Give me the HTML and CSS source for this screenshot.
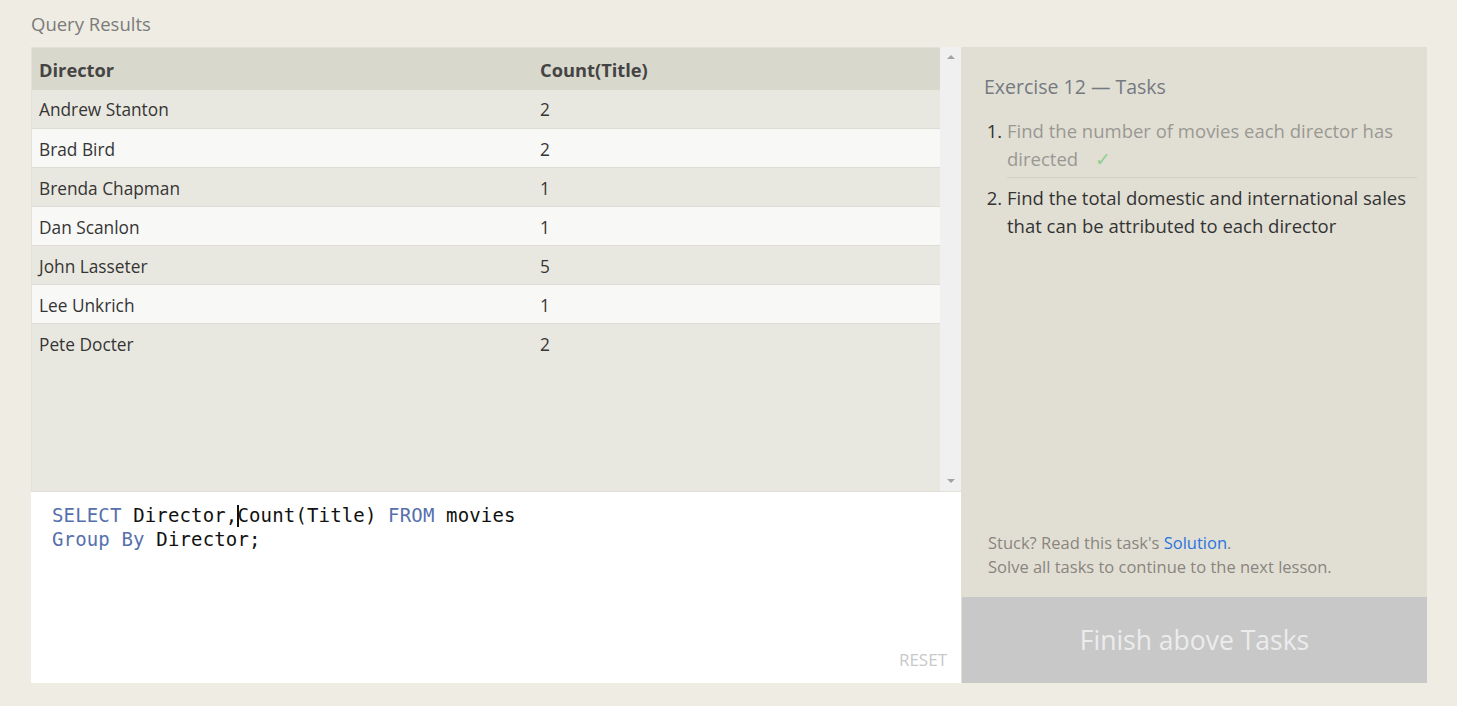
FILE: index.html
```html
<!DOCTYPE html>
<html>
<head>
<meta charset="utf-8">
<link rel="stylesheet" href="styles.css">
</head>
<body>
<header class="page-title">Query Results</header>
<main class="workspace">
  <section class="left">
    <div class="results">
      <div class="table-area">
        <table class="grid">
          <thead>
            <tr><th class="col-a">Director</th><th>Count(Title)</th></tr>
          </thead>
          <tbody>
            <tr><td>Andrew Stanton</td><td>2</td></tr>
            <tr><td>Brad Bird</td><td>2</td></tr>
            <tr><td>Brenda Chapman</td><td>1</td></tr>
            <tr><td>Dan Scanlon</td><td>1</td></tr>
            <tr><td>John Lasseter</td><td>5</td></tr>
            <tr><td>Lee Unkrich</td><td>1</td></tr>
            <tr><td>Pete Docter</td><td>2</td></tr>
          </tbody>
        </table>
      </div>
      <div class="scrollbar">
        <span class="arrow up"></span>
        <span class="arrow down"></span>
      </div>
    </div>
    <div class="editor">
      <pre class="code"><span class="kw">SELECT</span> Director,<span class="caret"></span>Count(Title) <span class="kw">FROM</span> movies
<span class="kw">Group By</span> Director;</pre>
      <div class="reset">RESET</div>
    </div>
  </section>
  <aside class="right">
    <div class="tasks">
      <h2 class="tasks-title">Exercise 12 — Tasks</h2>
      <ol class="task-list">
        <li class="task done">Find the number of movies each director has directed <span class="check">✓</span></li>
        <li class="task">Find the total domestic and international sales that can be attributed to each director</li>
      </ol>
    </div>
    <div class="help">
      <div>Stuck? Read this task's <a class="link">Solution</a>.</div>
      <div>Solve all tasks to continue to the next lesson.</div>
    </div>
    <div class="finish">Finish above Tasks</div>
  </aside>
</main>
</body>
</html>
```
FILE: styles.css
```css
html, body {
  margin: 0;
  padding: 0;
}
body {
  background: #efece4;
  font-family: "Open Sans", "Noto Sans", sans-serif;
  padding: 0 30px 0 31px;
  height: 706px;
  box-sizing: border-box;
  overflow: hidden;
}
.page-title {
  height: 47px;
  display: flex;
  align-items: center;
  font-size: 18.5px;
  color: #7b7b7b;
}
.workspace {
  display: flex;
  height: 636px;
}
.left {
  width: 930px;
  display: flex;
  flex-direction: column;
}
.results {
  height: 444px;
  display: flex;
  background: #e9e8e0;
  border-left: 1px solid #e3e2da;
  box-sizing: border-box;
}
.table-area {
  flex: 1;
}
.grid {
  width: 100%;
  border-collapse: collapse;
  font-size: 17.3px;
  color: #353535;
}
.grid th {
  text-align: left;
  background: #d9d8cc;
  height: 42px;
  padding: 2px 7px 0;
  font-size: 18.3px;
  font-weight: 700;
  color: #444;
  border-top: 1px solid #e2e1d9;
  box-sizing: border-box;
}
.grid .col-a {
  width: 501px;
}
.grid td {
  height: 39px;
  padding: 2px 7px 0;
  border-bottom: 1px solid #dedcd4;
  box-sizing: border-box;
}
.grid tbody tr:nth-child(odd) td {
  background: #e9e8e0;
}
.grid tbody tr:nth-child(even) td {
  background: #f8f8f7;
}
.grid tbody tr:last-child td {
  border-bottom: none;
}
.scrollbar {
  width: 21px;
  background: #f0f0f0;
  display: flex;
  flex-direction: column;
  justify-content: space-between;
  align-items: center;
  padding: 8px 0 8px;
  box-sizing: border-box;
}
.arrow {
  width: 0;
  height: 0;
  border-left: 4px solid transparent;
  border-right: 4px solid transparent;
}
.arrow.up {
  border-bottom: 4px solid #a3a3a3;
}
.arrow.down {
  border-top: 4px solid #a3a3a3;
}
.editor {
  flex: 1;
  background: #fff;
  border-top: 1px solid #e2e0d8;
  display: flex;
  flex-direction: column;
  justify-content: space-between;
}
.code {
  margin: 0;
  padding: 11px 0 0 21px;
  font-family: "DejaVu Sans Mono", monospace;
  font-size: 19px;
  letter-spacing: 0.15px;
  line-height: 24px;
  color: #111;
}
.kw {
  color: #5670ad;
}
.caret {
  display: inline-block;
  width: 0;
  height: 22px;
  border-left: 2px solid #111;
  vertical-align: -5px;
  margin-right: -2px;
}
.reset {
  align-self: flex-end;
  font-size: 17px;
  color: #c9c9c9;
  padding: 0 14px 12px 0;
}
.right {
  width: 466px;
  background: #e1dfd4;
  display: flex;
  flex-direction: column;
}
.tasks {
  padding: 27px 10px 0 23px;
}
.tasks-title {
  margin: 0 0 17px;
  font-size: 19.5px;
  font-weight: 400;
  color: #757a80;
  line-height: 26px;
}
.task-list {
  margin: 0;
  padding: 0 0 0 23px;
  font-size: 18.5px;
  line-height: 28px;
  color: #333;
}
.task {
  padding-left: 0;
}
.task.done {
  color: #9a9893;
  padding-bottom: 4px;
  border-bottom: 1px solid #d2d0c5;
  margin-bottom: 6px;
}
.task::marker {
  color: #333;
}
.check {
  color: #8fcf8f;
  margin-left: 12px;
}
.help {
  margin-top: auto;
  padding: 0 10px 18px 27px;
  font-size: 16.5px;
  line-height: 24px;
  color: #8a857e;
}
.link {
  color: #2a74e0;
}
.finish {
  height: 86px;
  background: #c8c8c8;
  display: flex;
  align-items: center;
  justify-content: center;
  font-size: 26.5px;
  color: #ececec;
  margin-left: 1px;
}
```
